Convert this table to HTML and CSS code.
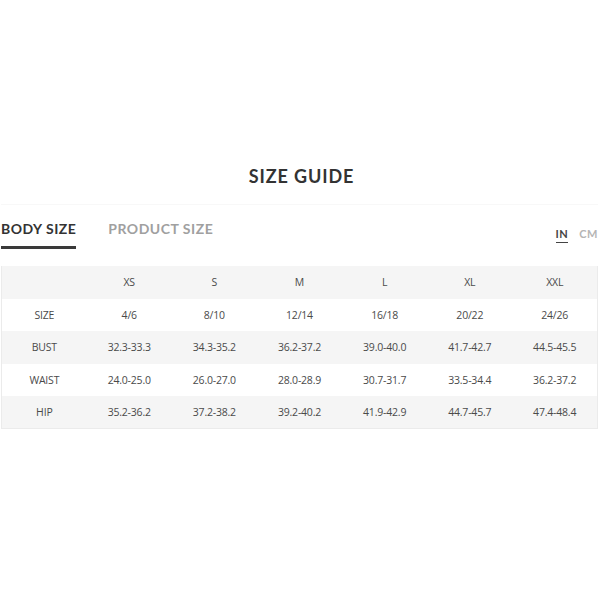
FILE: index.html
```html
<!DOCTYPE html>
<html>
<head>
<meta charset="utf-8">
<link rel="stylesheet" href="styles.css">
</head>
<body>
<div class="modal">
  <header class="head"><h1 class="title">SIZE GUIDE</h1></header>
  <div class="tabs-row">
    <div class="tabs">
      <span class="tab active">BODY SIZE</span>
      <span class="tab">PRODUCT SIZE</span>
    </div>
    <div class="units">
      <span class="unit active">IN</span>
      <span class="unit">CM</span>
    </div>
  </div>
  <table class="chart">
    <tr class="grey"><td></td><td>XS</td><td>S</td><td>M</td><td>L</td><td>XL</td><td>XXL</td></tr>
    <tr><td>SIZE</td><td>4/6</td><td>8/10</td><td>12/14</td><td>16/18</td><td>20/22</td><td>24/26</td></tr>
    <tr class="grey"><td>BUST</td><td>32.3-33.3</td><td>34.3-35.2</td><td>36.2-37.2</td><td>39.0-40.0</td><td>41.7-42.7</td><td>44.5-45.5</td></tr>
    <tr><td>WAIST</td><td>24.0-25.0</td><td>26.0-27.0</td><td>28.0-28.9</td><td>30.7-31.7</td><td>33.5-34.4</td><td>36.2-37.2</td></tr>
    <tr class="grey"><td>HIP</td><td>35.2-36.2</td><td>37.2-38.2</td><td>39.2-40.2</td><td>41.9-42.9</td><td>44.7-45.7</td><td>47.4-48.4</td></tr>
  </table>
</div>
</body>
</html>
```
FILE: styles.css
```css
html, body {
  margin: 0;
  padding: 0;
  background: #fff;
}
.modal {
  width: 597px;
  margin-left: 1px;
  font-family: Lato, "Open Sans", sans-serif;
}
.head {
  padding: 164px 0 16px 4px;
  border-bottom: 1px solid #f8f8f8;
  text-align: center;
}
.title {
  margin: 0;
  font-size: 18px;
  line-height: 24px;
  font-weight: 700;
  letter-spacing: 0.9px;
  color: #333;
}
.tabs-row {
  display: flex;
  justify-content: space-between;
  align-items: flex-start;
}
.tabs {
  display: flex;
  gap: 32px;
  padding-top: 16px;
}
.tab {
  font-size: 14px;
  line-height: 16px;
  font-weight: 700;
  letter-spacing: 0.5px;
  color: #a0a0a0;
  padding-bottom: 9px;
  border-bottom: 3px solid transparent;
}
.tab.active {
  color: #333;
  border-bottom-color: #3a3a3a;
}
.units {
  display: flex;
  gap: 11px;
  margin-top: 22px;
}
.unit {
  font-size: 11px;
  line-height: 14px;
  font-weight: 700;
  letter-spacing: 0.5px;
  color: #b5b5b5;
  padding-bottom: 1px;
  border-bottom: 1.5px solid transparent;
}
.unit.active {
  color: #444;
  border-bottom-color: #444;
}
.chart {
  margin-top: 17px;
  width: 597px;
  table-layout: fixed;
  border-collapse: collapse;
  border: 1px solid #ebebeb;
  border-top: none;
  font-family: "Open Sans", sans-serif;
  font-size: 10.5px;
  letter-spacing: -0.2px;
  color: #4a4a4a;
}
.chart tr {
  height: 32.6px;
}
.chart td {
  padding: 0;
  text-align: center;
  vertical-align: middle;
}
.chart tr.grey {
  background: #f5f5f5;
}
```
